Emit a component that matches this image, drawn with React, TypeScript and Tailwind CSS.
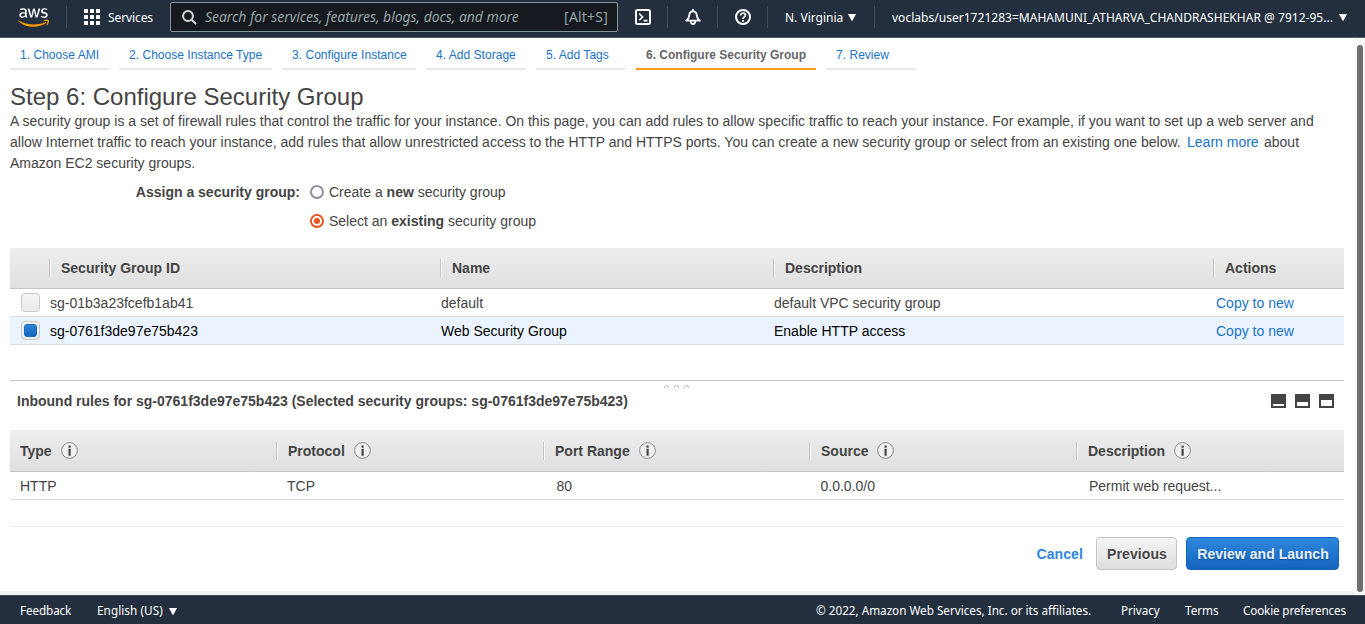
import React from 'react';
import { FaAws } from 'react-icons/fa';

const SANS = "font-['Liberation_Sans',Arial,sans-serif]";
const NAV = "font-['Noto_Sans',sans-serif]";

function Caret() {
  return (
    <svg width="8" height="7" viewBox="0 0 8 7" className="block shrink-0">
      <path d="M0 0h8L4.6 6.4q-.6.8-1.2 0z" fill="#fff" />
    </svg>
  );
}

function Divider() {
  return <div className="h-[22px] w-px shrink-0 bg-[#414d5c]" />;
}

function Logo() {
  return (
    <div className="flex h-[25px] w-[31px] items-center">
      <svg width="0" height="0" className="absolute">
        <defs>
          <linearGradient id="aws" gradientUnits="userSpaceOnUse" x1="0" y1="0" x2="0" y2="512">
            <stop offset="0.59" stopColor="#fff" />
            <stop offset="0.59" stopColor="#f90" />
          </linearGradient>
        </defs>
      </svg>
      <FaAws className="h-[25px] w-[31px]" style={{ fill: 'url(#aws)' }} />
    </div>
  );
}

function NavBar() {
  return (
    <header className={`flex h-[38px] shrink-0 items-start border-b border-[#545b64] bg-[#232f3e] text-[12px] leading-[16px] whitespace-nowrap text-white ${NAV}`}>
      <div className="flex h-[34px] w-[66px] items-center pl-[18px]">
        <Logo />
      </div>
      <div className="flex h-[34px] w-[104px] items-center">
        <Divider />
        <svg width="16" height="16" viewBox="0 0 16 16" className="ml-[17px]" fill="#fff">
          {[0, 6, 12].map((y) =>
            [0, 6, 12].map((x) => <rect key={`${x}-${y}`} x={x} y={y} width="4" height="4" rx="0.5" />),
          )}
        </svg>
        <span className="ml-2 pt-[2px] tracking-[-0.1px]">Services</span>
      </div>
      <div className="mt-[2px] flex h-[30px] w-[448px] items-center rounded-[2px] border border-[#879596] bg-[#16191f] text-[14px] text-[#95a5a6]">
        <svg width="15" height="15" viewBox="0 0 15 15" className="ml-[11px]" fill="none" stroke="#d5dbdb" strokeWidth="2">
          <circle cx="6" cy="6" r="4.9" />
          <path d="M9.6 9.6l4.4 4.4" />
        </svg>
        <span className="ml-[8px] flex-1 tracking-[-0.060px] italic">Search for services, features, blogs, docs, and more</span>
        <span className="mr-[9px] tracking-[0.2px]">[Alt+S]</span>
      </div>
      <div className="flex h-[34px] w-[50px] items-center justify-between pl-[17px]">
        <svg width="16" height="16" viewBox="0 0 16 16" fill="none" stroke="#fff" strokeWidth="2" strokeLinejoin="round">
          <rect x="1" y="1" width="14" height="14" rx="1.5" />
          <path d="M4.2 4.500L7.600 7.900 4.200 11.300M8.500 11.600h4" strokeWidth="1.600" strokeLinejoin="miter" />
        </svg>
        <Divider />
      </div>
      <div className="flex h-[34px] w-[50px] items-center justify-between pl-[17px]">
        <svg width="16" height="16" viewBox="0 0 16 16" fill="none" stroke="#fff" strokeWidth="2" strokeLinejoin="round">
          <path d="M8 0v2M1.2 11.600C3 10.200 4 9.300 4.200 6.600 4.400 3.800 5.700 2.400 8 2.400s3.600 1.400 3.800 4.200c.2 2.700 1.200 3.600 3 5z" strokeWidth="1.800" />
          <path d="M5.600 12.200c.2 1.900 1.100 2.900 2.400 2.900s2.200-1 2.400-2.900" strokeWidth="1.700" />
        </svg>
        <Divider />
      </div>
      <div className="flex h-[34px] w-[50px] items-center justify-between pl-[17px]">
        <svg width="16" height="16" viewBox="0 0 16 16" fill="none" stroke="#fff" strokeWidth="2">
          <circle cx="8" cy="8" r="7" />
          <path d="M5.600 6.500C5.600 5 6.600 4.200 8 4.200s2.400.8 2.400 2.100C10.400 7.900 8 7.900 8 9.900" strokeWidth="1.700" />
          <path d="M8 11v1.800" strokeWidth="1.800" />
        </svg>
        <Divider />
      </div>
      <div className="flex h-[34px] w-[107px] items-center pl-[17px]">
        <span className="w-[63px] pt-[2px]">N. Virginia</span>
        <Caret />
        <span className="flex-1" />
        <Divider />
      </div>
      <div className="flex h-[34px] flex-1 items-center pl-[17px]">
        <span className="w-[447px] pt-[2px] tracking-[0.025px]">voclabs/user1721283=MAHAMUNI_ATHARVA_CHANDRASHEKHAR @ 7912-95...</span>
        <Caret />
      </div>
    </header>
  );
}

const steps: [string, string][] = [
  ['1. Choose AMI', 'w-[99px]'],
  ['2. Choose Instance Type', 'w-[153px]'],
  ['3. Configure Instance', 'w-[134px]'],
  ['4. Add Storage', 'w-[100px]'],
  ['5. Add Tags', 'w-[90px]'],
  ['6. Configure Security Group', 'w-[180px]'],
  ['7. Review', 'w-[90px]'],
];

function Steps() {
  return (
    <nav className="flex h-8 gap-[10px] text-[12px] whitespace-nowrap">
      {steps.map(([label, width], i) => (
        <div
          key={label}
          className={`h-8 shrink-0 border-b-2 pl-[10px] leading-[34px] ${width} ${
            i === 5 ? 'border-[#ff9919] font-bold text-[#666]' : 'border-[#eaeaea] tracking-[0.03px] text-[#1a73c7]'
          }`}
        >
          {label}
        </div>
      ))}
    </nav>
  );
}

function Radio({ on }: { on?: boolean }) {
  return on ? (
    <span className="-mt-px flex size-[14px] items-center justify-center rounded-full border-2 border-[#e95420] bg-white">
      <span className="size-[6px] rounded-full bg-[#e95420]" />
    </span>
  ) : (
    <span className="-mt-px size-[14px] rounded-full border-2 border-[#8f8f9d] bg-white" />
  );
}

function Check({ on }: { on?: boolean }) {
  return (
    <span className="flex h-[19px] w-[19px] items-center justify-center rounded-[4px] border border-[#c8c8c8] bg-linear-to-b from-[#f5f5f5] to-[#eaeaea]">
      {on && <span className="h-[13px] w-[13px] rounded-[3px] border border-[#1a66b8] bg-linear-to-b from-[#2e87dc] to-[#1166bb]" />}
    </span>
  );
}

function Sep() {
  return <span className="h-[18px] w-[2px] shrink-0 border-r border-l border-r-[#fafafa] border-l-[#c4c4c4]" />;
}

function Info() {
  return (
    <svg width="17" height="17" viewBox="0 0 17 17" className="ml-[9px]">
      <circle cx="8.500" cy="8.500" r="7.900" fill="#f0f0f0" stroke="#8a8a8a" />
      <path d="M7.500 3.500h2.200v2.200h-2.200zM7.500 6.700h2.200v7h-2.200z" fill="#444" />
    </svg>
  );
}

const groupCols = ['w-[391px]', 'w-[333px]', 'w-[440px]', 'w-[131px]'];
const groupHeads = ['Security Group ID', 'Name', 'Description', 'Actions'];
const groups = [
  { id: 'sg-01b3a23fcefb1ab41', name: 'default', desc: 'default VPC security group', on: false },
  { id: 'sg-0761f3de97e75b423', name: 'Web Security Group', desc: 'Enable HTTP access', on: true },
];

function GroupTable() {
  return (
    <section>
      <div className="flex h-[41px] items-center border-b border-[#c4c4c4] bg-linear-to-b from-[#eeeeee] to-[#dfdfdf] pl-[39px] font-bold">
        {groupHeads.map((h, i) => (
          <div key={h} className={`flex items-center ${groupCols[i]}`}>
            <Sep />
            <span className="ml-[10px]">{h}</span>
          </div>
        ))}
      </div>
      {groups.map((g) => (
        <div key={g.id} className={`flex h-[28px] items-center border-b border-[#dcdcdc] ${g.on ? 'bg-[#eaf3fe] text-black' : ''}`}>
          <div className="w-10 pl-[11px]">
            <Check on={g.on} />
          </div>
          <div className="w-[391px] pt-px">{g.id}</div>
          <div className="w-[333px] pt-px">{g.name}</div>
          <div className="w-[442px] pt-px">{g.desc}</div>
          <a className="pt-px text-[#1a73c7]">Copy to new</a>
        </div>
      ))}
    </section>
  );
}

function PaneIcon({ top }: { top: number }) {
  return (
    <svg width="15" height="14" viewBox="0 0 15 14">
      <rect width="15" height="14" fill="#444" />
      <rect x="2" y={top} width="11" height={12 - top} fill="#fff" />
    </svg>
  );
}

const ruleHeads: [string, string][] = [
  ['Protocol', 'w-[267px]'],
  ['Port Range', 'w-[266px]'],
  ['Source', 'w-[267px]'],
  ['Description', 'w-[267px]'],
];

function RuleTable() {
  return (
    <section>
      <div className="flex h-[42px] items-center border-b border-[#c4c4c4] bg-linear-to-b from-[#eeeeee] to-[#dfdfdf] font-bold">
        <div className="flex w-[266px] items-center pl-[10px]">
          <span className="pt-px">Type</span>
          <Info />
        </div>
        {ruleHeads.map(([h, w]) => (
          <div key={h} className={`flex items-center ${w}`}>
            <Sep />
            <span className="ml-[10px] pt-px">{h}</span>
            <Info />
          </div>
        ))}
      </div>
      <div className="flex h-[28px] items-center border-b border-[#dcdcdc] pt-px pl-[10px]">
        <div className="w-[267px]">HTTP</div>
        <div className="w-[269.5px]">TCP</div>
        <div className="w-[264px]">80</div>
        <div className="w-[268.5px]">0.0.0.0/0</div>
        <div>Permit web request...</div>
      </div>
    </section>
  );
}

export default function App() {
  return (
    <div className="flex h-[624px] w-[1365px] flex-col overflow-hidden bg-white">
      <NavBar />
      <div className={`flex h-[557px] shrink-0 text-[14px] leading-[21px] whitespace-nowrap text-[#444] ${SANS}`}>
        <div className="flex flex-1 flex-col border-b-4 border-[#f2f3f3]">
          <main className="flex w-[1344px] flex-col pl-[10px]">
            <Steps />
            <h1 className="mt-[12px] h-[29px] text-[24px] leading-[30px]">Step 6: Configure Security Group</h1>
            <p>
              A security group is a set of firewall rules that control the traffic for your instance. On this page, you can add rules to allow specific traffic to reach your instance. For example, if you want to set up a web server and
              <br />
              allow Internet traffic to reach your instance, add rules that allow unrestricted access to the HTTP and HTTPS ports. You can create a new security group or select from an existing one below.{' '}
              <a className="ml-[2.5px] text-[#1a73c7]">Learn more</a> <span className="ml-[1.5px]">about</span>
              <br />
              Amazon EC2 security groups.
            </p>
            <div className="mt-[4px] flex h-[70px]">
              <div className="w-[290px] pt-[4px] text-right font-bold">Assign a security group:</div>
              <div className="flex flex-col gap-2 pt-[4px] pl-[10px]">
                <label className="flex h-[21px] items-center gap-[5px]">
                  <Radio />
                  <span>Create a <b>new</b> security group</span>
                </label>
                <label className="flex h-[21px] items-center gap-[5px]">
                  <Radio on />
                  <span>Select an <b>existing</b> security group</span>
                </label>
              </div>
            </div>
            <GroupTable />
            <div className="mt-[35px] flex h-[10px] justify-center gap-[5px] border-t border-[#c4c4c4] pt-[4px] pr-[2px]">
              {[0, 1, 2].map((i) => (
                <span key={i} className="h-[3px] w-[5px] rounded-t-full border border-b-0 border-[#c4c4c4]" />
              ))}
            </div>
            <div className="flex h-[40px] items-start justify-between pr-[10px] pl-[7px]">
              <b className="pt-px">Inbound rules for sg-0761f3de97e75b423 (Selected security groups: sg-0761f3de97e75b423)</b>
              <div className="flex gap-[9px] pt-[4px]">
                <PaneIcon top={10} />
                <PaneIcon top={8} />
                <PaneIcon top={6} />
              </div>
            </div>
            <RuleTable />
            <div className="mt-[26px] flex items-center justify-end border-t border-[#eaeaea] pt-[10px] pr-[5px] text-[14px] font-bold">
              <a className="mr-[13px] pt-[2px] tracking-[0.1px] text-[#2e87dc]">Cancel</a>
              <button className="mr-[9px] h-[33px] w-[81px] rounded-[4px] border border-[#c4c4c4] bg-linear-to-b from-[#f5f5f5] to-[#dddddd] pt-[2px] pl-px tracking-[0.1px] [text-shadow:0_1px_0_#fff]">Previous</button>
              <button className="h-[33px] w-[153px] rounded-[4px] border border-[#1166bb] bg-linear-to-b from-[#2e87dc] to-[#1464bd] pt-[2px] pl-px tracking-[0.05px] text-[#eaf3fe] [text-shadow:0_1px_1px_#0b4a8f]">Review and Launch</button>
            </div>
          </main>
        </div>
        <div className="flex w-[11px] justify-center bg-[#f7f7f7] pt-[7px]">
          <div className="mr-px ml-[2px] h-[547px] w-[6px] rounded-full bg-[#6e6e6e]" />
        </div>
      </div>
      <footer className={`flex h-[29px] items-center border-t border-[#414d5c] bg-[#232f3e] pt-[2px] text-[11.7px] whitespace-nowrap text-white ${NAV}`}>
        <span className="w-[97px] pl-5 tracking-[-0.1px]">Feedback</span>
        <span className="w-[72px] tracking-[0.08px]">English (US)</span>
        <Caret />
        <span className="flex-1" />
        <span className="w-[305px]">© 2022, Amazon Web Services, Inc. or its affiliates.</span>
        <span className="w-[64px] tracking-[-0.050px]">Privacy</span>
        <span className="w-[58px]">Terms</span>
        <span className="w-[122px] tracking-[-0.15px]">Cookie preferences</span>
      </footer>
    </div>
  );
}
